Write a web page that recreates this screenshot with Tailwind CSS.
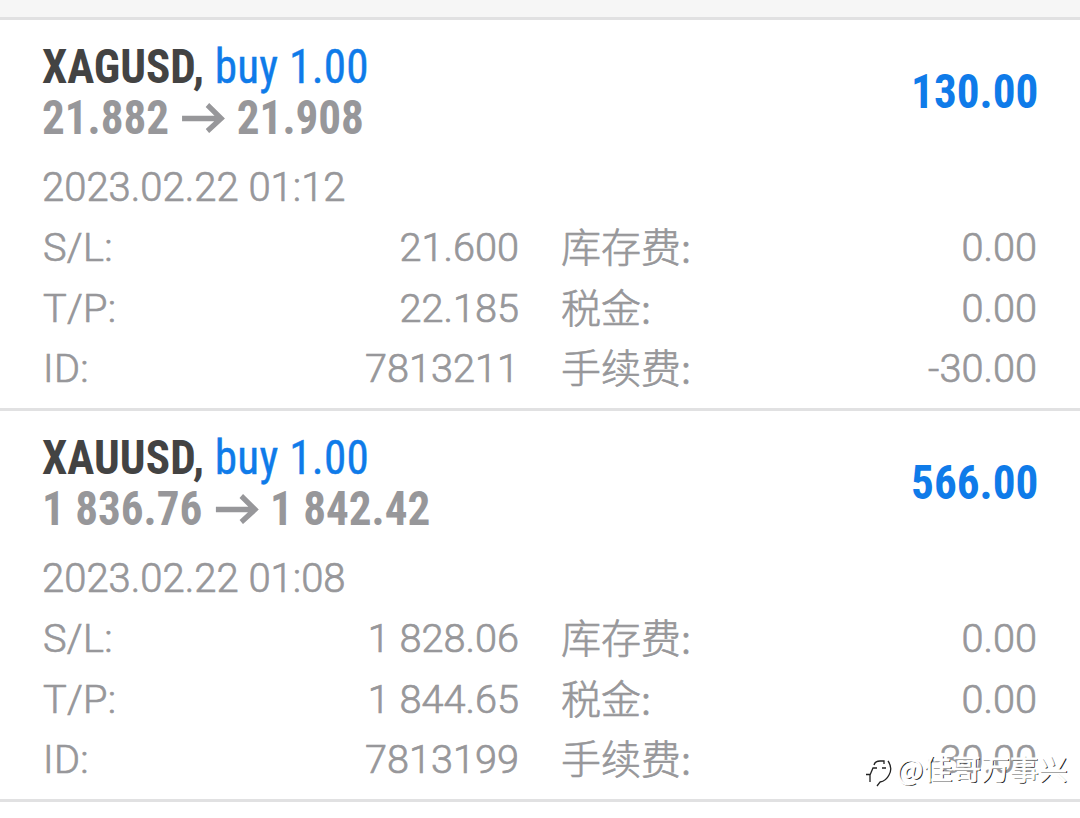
<!DOCTYPE html>
<html lang="zh-CN">
<head>
<meta charset="utf-8">
<title>Positions</title>
<script src="https://cdn.jsdelivr.net/npm/@tailwindcss/browser@4"></script>
</head>
<body class="relative h-[818px] overflow-hidden bg-white font-[Roboto,'Noto_Sans_CJK_SC',sans-serif] text-[#97979a]">
<div class="h-5 border-b-3 border-[#e1e1e2] bg-[#f6f6f6]"></div>

<section class="h-[391px] border-b-3 border-[#e1e1e2] px-[42px] pt-[21px]">
  <div class="flex h-[102px] items-center justify-between font-['Roboto_Condensed',Roboto,sans-serif] text-[48px] leading-[51px]">
    <div class="origin-left scale-x-[0.94]">
      <div class="whitespace-pre"><span class="font-bold text-[#434343]">XAGUSD,</span><span class="tracking-[0.3px] text-[#0f7be9] [-webkit-text-stroke:0.4px_#0f7be9]"> buy 1.00</span></div>
      <div class="flex font-bold"><span>21.882</span><svg class="ml-[13px] mr-[11px] mt-[11px] h-[30px] w-[48px]" viewBox="0 0 48 30" fill="none" stroke="currentColor" stroke-width="5.5"><path d="M1 15.500H43M28 2L42.500 15.500L28 28"/></svg><span>21.908</span></div>
    </div>
    <div class="-mt-0.5 origin-right scale-x-[0.94] font-bold text-[#0f7be9]">130.00</div>
  </div>
  <div class="mt-[14px] text-[40px] leading-[61px] font-light [-webkit-text-stroke:0.7px_#97979a]">
    <div class="h-[60px]">2023.02.22 01:12</div>
    <div class="grid grid-cols-[477px_476px] gap-x-[42px] text-[39.7px]">
      <div class="flex h-[61px] justify-between"><span class="pl-px tracking-[0.3px]">S/L:</span><span>21.600</span></div>
      <div class="flex h-[61px] justify-between"><span class="-mt-0.5 font-['Noto_Sans_CJK_SC',sans-serif] text-[40px]">库存费:</span><span>0.00</span></div>
      <div class="flex h-[60px] justify-between"><span class="pl-px tracking-[0.3px]">T/P:</span><span>22.185</span></div>
      <div class="flex h-[60px] justify-between"><span class="-mt-0.5 font-['Noto_Sans_CJK_SC',sans-serif] text-[40px]">税金:</span><span>0.00</span></div>
      <div class="flex h-[61px] justify-between"><span class="pl-px tracking-[0.3px]">ID:</span><span>7813211</span></div>
      <div class="flex h-[61px] justify-between"><span class="-mt-0.5 font-['Noto_Sans_CJK_SC',sans-serif] text-[40px]">手续费:</span><span>-30.00</span></div>
    </div>
  </div>
</section>

<section class="h-[391px] border-b-3 border-[#e1e1e2] px-[42px] pt-[21px]">
  <div class="flex h-[102px] items-center justify-between font-['Roboto_Condensed',Roboto,sans-serif] text-[48px] leading-[51px]">
    <div class="origin-left scale-x-[0.94]">
      <div class="whitespace-pre"><span class="font-bold tracking-[0.1px] text-[#434343]">XAUUSD,</span><span class="tracking-[0.3px] text-[#0f7be9] [-webkit-text-stroke:0.4px_#0f7be9]"> buy 1.00</span></div>
      <div class="flex font-bold"><span>1 836.76</span><svg class="ml-[13px] mr-[11px] mt-[11px] h-[30px] w-[48px]" viewBox="0 0 48 30" fill="none" stroke="currentColor" stroke-width="5.5"><path d="M1 15.500H43M28 2L42.500 15.500L28 28"/></svg><span>1 842.42</span></div>
    </div>
    <div class="-mt-0.5 origin-right scale-x-[0.94] font-bold text-[#0f7be9]">566.00</div>
  </div>
  <div class="mt-[14px] text-[40px] leading-[61px] font-light [-webkit-text-stroke:0.7px_#97979a]">
    <div class="h-[60px]">2023.02.22 01:08</div>
    <div class="grid grid-cols-[477px_476px] gap-x-[42px] text-[39.7px]">
      <div class="flex h-[61px] justify-between"><span class="pl-px tracking-[0.3px]">S/L:</span><span>1 828.06</span></div>
      <div class="flex h-[61px] justify-between"><span class="-mt-0.5 font-['Noto_Sans_CJK_SC',sans-serif] text-[40px]">库存费:</span><span>0.00</span></div>
      <div class="flex h-[60px] justify-between"><span class="pl-px tracking-[0.3px]">T/P:</span><span>1 844.65</span></div>
      <div class="flex h-[60px] justify-between"><span class="-mt-0.5 font-['Noto_Sans_CJK_SC',sans-serif] text-[40px]">税金:</span><span>0.00</span></div>
      <div class="flex h-[61px] justify-between"><span class="pl-px tracking-[0.3px]">ID:</span><span>7813199</span></div>
      <div class="flex h-[61px] justify-between"><span class="-mt-0.5 font-['Noto_Sans_CJK_SC',sans-serif] text-[40px]">手续费:</span><span>-30.00</span></div>
    </div>
  </div>
</section>

<div class="absolute top-[748px] left-[864px] flex h-10 items-center text-white">
  <svg class="h-10 w-[32px]" viewBox="0 0 32 40" fill="none">
    <path d="M4 26H7L9 18Q11 14 16 14H19M14 20H19M8 20H12M22 13Q27 17 25 25Q23 30 16 31L12 37" stroke="#fff" stroke-width="3"/>
    <path d="M2 26.500H6V34M6 27L9 20H13M10 17Q11 13 16 13H20V16M18 20H22M24 13Q29 20 25 27Q22 33 16 34L13 38" stroke="#222" stroke-width="1.300"/>
  </svg>
  <span class="font-['Noto_Sans_CJK_SC',sans-serif] text-[28.8px] leading-10 [-webkit-text-stroke:0.8px_#fff] [text-shadow:1.2px_1.2px_0.3px_#222]">@佳哥万事兴</span>
</div>
</body>
</html>
